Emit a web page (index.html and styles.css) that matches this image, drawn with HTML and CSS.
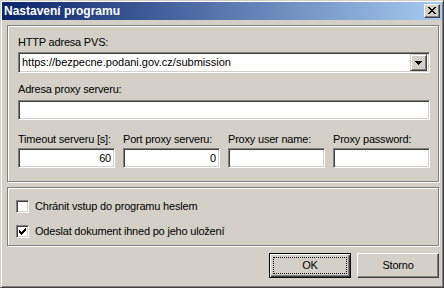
FILE: index.html
```html
<!DOCTYPE html>
<html lang="cs">
<head>
    <meta charset="UTF-8">
    <title>Nastavení programu</title>
    <link rel="stylesheet" href="styles.css">
</head>
<body>

    <!-- Dialog window -->
    <div class="window">
        <div class="titlebar">
            <span class="title">Nastavení programu</span>
            <span class="close">
                <svg width="8" height="7" viewBox="0 0 8 7"><path fill="#000" d="M0 0h2v1H0z M6 0h2v1H6z M1 1h2v1H1z M5 1h2v1H5z M2 2h4v1H2z M3 3h2v1H3z M2 4h4v1H2z M1 5h2v1H1z M5 5h2v1H5z M0 6h2v1H0z M6 6h2v1H6z"/></svg>
            </span>
        </div>

        <div class="client">
            <!-- Connection settings -->
            <div class="group group-conn">
                <div class="lbl">HTTP adresa PVS:</div>
                <div class="combo">
                    <span class="combo-text">https://bezpecne.podani.gov.cz/submission</span>
                    <span class="combo-btn">
                        <svg width="7" height="4" viewBox="0 0 7 4"><path fill="#000" d="M0 0h7v1H0z M1 1h5v1H1z M2 2h3v1H2z M3 3h1v1H3z"/></svg>
                    </span>
                </div>

                <div class="lbl lbl-proxy">Adresa proxy serveru:</div>
                <div class="field field-wide"></div>

                <div class="row">
                    <div class="col">
                        <div class="lbl">Timeout serveru [s]:</div>
                        <div class="field num">60</div>
                    </div>
                    <div class="col">
                        <div class="lbl">Port proxy serveru:</div>
                        <div class="field num">0</div>
                    </div>
                    <div class="col">
                        <div class="lbl">Proxy user name:</div>
                        <div class="field"></div>
                    </div>
                    <div class="col">
                        <div class="lbl">Proxy password:</div>
                        <div class="field"></div>
                    </div>
                </div>
            </div>

            <!-- Options -->
            <div class="group group-opts">
                <div class="check">
                    <span class="box"></span>
                    <span>Chránit vstup do programu heslem</span>
                </div>
                <div class="check check-second">
                    <span class="box">
                        <svg width="7" height="7" viewBox="0 0 7 7"><path fill="#000" d="M6 0h1v1H6z M5 1h2v1H5z M0 2h1v1H0z M4 2h3v1H4z M0 3h2v1H0z M3 3h3v1H3z M0 4h5v1H0z M1 5h3v1H1z M2 6h1v1H2z"/></svg>
                    </span>
                    <span>Odeslat dokument ihned po jeho uložení</span>
                </div>
            </div>

            <div class="buttons">
                <div class="btn btn-default"><span class="focus">OK</span></div>
                <div class="btn">Storno</div>
            </div>
        </div>
    </div>

</body>
</html>
```

FILE: styles.css
```css
* {
    box-sizing: border-box;
}

body {
    margin: 0;
    background-color: #d4d0c8;
    color: #000;
    font-family: 'Liberation Sans', Arial, sans-serif;
    font-size: 11px;
    letter-spacing: -0.2px;
    line-height: 13px;
}

.window {
    width: 444px;
    height: 288px;
    padding: 1px;
    background-color: #d4d0c8;
    border: 1px solid;
    border-color: #d4d0c8 #404040 #404040 #d4d0c8;
    box-shadow: inset 1px 1px #fff, inset -1px -1px #808080;
    display: flex;
    flex-direction: column;
}

/* Title bar */
.titlebar {
    height: 18px;
    display: flex;
    align-items: flex-start;
    justify-content: space-between;
    background: linear-gradient(to right, #0a246a, #a6caf0);
}

.title {
    color: #fff;
    font-weight: bold;
    font-size: 12px;
    letter-spacing: 0;
    line-height: 18px;
    padding-left: 2px;
}

.close {
    width: 16px;
    height: 14px;
    margin: 2px 2px 0 0;
    display: flex;
    align-items: center;
    justify-content: center;
    background-color: #d4d0c8;
    border: 1px solid;
    border-color: #fff #404040 #404040 #fff;
    box-shadow: inset -1px -1px #808080;
}

.close svg {
    margin-left: -1px;
    margin-top: -1px;
}

/* Client area */
.client {
    flex: 1;
    padding: 5px 3px 0 5px;
}

.group {
    border: 1px solid #808080;
    box-shadow: inset 1px 1px #fff, 1px 1px #fff;
}

.group-conn {
    padding: 10px 8px 13px 10px;
}

.lbl {
    margin-bottom: 3px;
    white-space: nowrap;
}

.lbl-proxy {
    margin-top: 10px;
    margin-bottom: 4px;
}

.combo,
.field {
    background-color: #fff;
    border: 1px solid;
    border-color: #808080 #fff #fff #808080;
    box-shadow: inset 1px 1px #404040, inset -1px -1px #d4d0c8;
}

.combo {
    height: 21px;
    padding: 2px;
    display: flex;
    align-items: center;
}

.combo-text {
    flex: 1;
    padding-left: 1px;
    line-height: 17px;
    letter-spacing: 0;
}

.combo-btn {
    width: 17px;
    height: 17px;
    display: flex;
    align-items: center;
    justify-content: center;
    background-color: #d4d0c8;
    border: 1px solid;
    border-color: #d4d0c8 #404040 #404040 #d4d0c8;
    box-shadow: inset 1px 1px #fff, inset -1px -1px #808080;
}

.field {
    height: 20px;
    padding: 0 3px;
    line-height: 18px;
}

.num {
    text-align: right;
}

.row {
    margin-top: 13px;
    display: grid;
    grid-template-columns: repeat(4, 1fr);
    column-gap: 8px;
}

.row .lbl {
    margin-bottom: 2px;
}

/* Options group */
.group-opts {
    margin-top: 5px;
    padding: 12px 8px 7px 8px;
}

.check {
    display: flex;
    align-items: center;
    gap: 6px;
    height: 13px;
}

.check-second {
    margin-top: 12px;
}

.box {
    width: 13px;
    height: 13px;
    padding: 2px;
    display: flex;
    align-items: center;
    justify-content: center;
    background-color: #fff;
    border: 1px solid;
    border-color: #808080 #fff #fff #808080;
    box-shadow: inset 1px 1px #404040, inset -1px -1px #d4d0c8;
}

/* Buttons */
.buttons {
    margin-top: 7px;
    display: flex;
    justify-content: flex-end;
    gap: 6px;
}

.btn {
    width: 82px;
    height: 25px;
    display: flex;
    align-items: center;
    justify-content: center;
    border: 1px solid;
    border-color: #fff #404040 #404040 #fff;
    box-shadow: inset -1px -1px #808080;
}

.btn-default {
    padding: 3px;
    border-color: #000;
    box-shadow: inset 1px 1px #fff, inset -1px -1px #404040, inset -2px -2px #808080;
}

.focus {
    flex: 1;
    align-self: stretch;
    display: flex;
    align-items: center;
    justify-content: center;
    border: 1px dotted #000;
}
```
